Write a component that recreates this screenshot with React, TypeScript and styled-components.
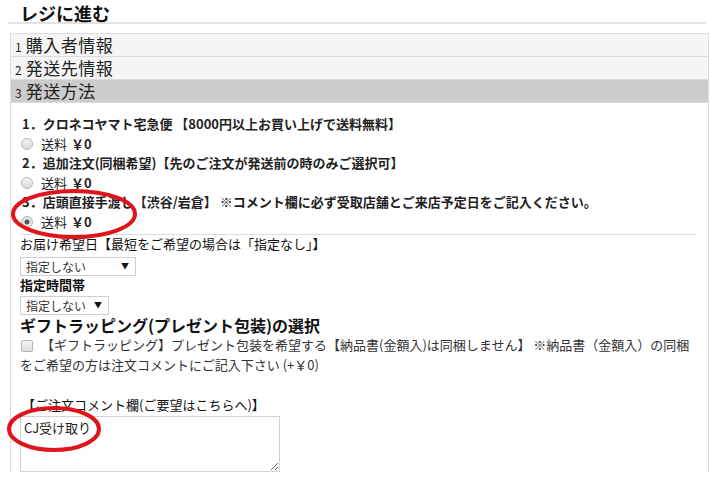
import React from "react";
import styled, { createGlobalStyle } from "styled-components";

const Global = createGlobalStyle`
  html, body { margin: 0; padding: 0; background: #fff; }
  body { font-family: "Noto Sans CJK JP", "Liberation Sans", sans-serif; color: #222; }
  * { box-sizing: border-box; }
`;

const Page = styled.div`
  position: relative;
  width: 710px;
  height: 491px;
  overflow: hidden;
  padding: 4px 2px 0 8px;
`;

const Title = styled.h2`
  margin: 0 2px 0 0;
  padding: 0 0 0 12px;
  height: 20px;
  line-height: 18px;
  font-size: 18px;
  font-weight: bold;
  color: #111;
  border-bottom: 2px solid #e2e2e2;
`;

const Panel = styled.div`
  margin: 9px 0 0 2px;
  width: 699px;
  border-left: 1px solid #ddd;
  border-right: 1px solid #ddd;
  border-top: 1px solid #ddd;
`;

const StepRow = styled.div<{ $active?: boolean }>`
  display: flex;
  align-items: baseline;
  height: 23px;
  line-height: 22px;
  padding-left: 4px;
  background: ${(p) => (p.$active ? "#cccccc" : "#f5f5f5")};
  border-bottom: 1px solid #dcdcdc;
`;

const StepNum = styled.span`
  font-size: 12px;
  margin-right: 4px;
`;

const StepLabel = styled.span`
  font-size: 17px;
  letter-spacing: 0.5px;
`;

const Content = styled.div`
  padding: 11px 11px 0 9px;
`;

const MethodTitle = styled.div`
  font-size: 13px;
  font-weight: bold;
  line-height: 20px;
  height: 20px;
  padding-left: 2px;
  white-space: nowrap;
`;

const RadioRow = styled.label`
  display: flex;
  align-items: center;
  height: 19px;
  font-size: 13px;
  font-weight: bold;
  padding-left: 1px;
`;

const Radio = styled.input`
  appearance: none;
  width: 12px;
  height: 12px;
  margin: 0 8px 0 0;
  border: 1px solid #b5b5b5;
  border-radius: 50%;
  background: linear-gradient(#f2f2f2, #dcdcdc);
  &:checked {
    background: radial-gradient(circle, #555 0 2.2px, #e4e4e4 2.8px);
  }
`;

const Fee = styled.span`
  font-weight: normal;
  margin-right: 4px;
`;

const Divider = styled.hr`
  border: 0;
  border-top: 1px solid #ddd;
  margin: 3px 0 0 0;
  width: 677px;
`;

const FieldLabel = styled.div<{ $bold?: boolean }>`
  font-size: 13px;
  font-weight: ${(p) => (p.$bold ? "bold" : "normal")};
  color: #111;
  line-height: 18px;
  height: 18px;
`;

const SelectWrap = styled.div<{ $w: number; $top: number }>`
  position: relative;
  width: ${(p) => p.$w}px;
  height: 19px;
  margin-top: ${(p) => p.$top}px;
`;

const Select = styled.select`
  appearance: none;
  display: block;
  width: 100%;
  height: 100%;
  border: 1px solid #cfcfcf;
  background: #fff;
  font-family: inherit;
  font-size: 12px;
  color: #333;
  padding: 0 0 0 5px;
  border-radius: 0;
`;

const Arrow = styled.span`
  position: absolute;
  right: 7px;
  top: 3px;
  font-size: 8px;
  line-height: 12px;
  color: #111;
  pointer-events: none;
`;

const GiftHeading = styled.div`
  font-size: 16px;
  font-weight: bold;
  line-height: 20px;
  height: 20px;
  color: #111;
`;

const GiftRow = styled.label`
  display: block;
  font-size: 13px;
  line-height: 20px;
  color: #333;
  width: 690px;
`;

const Check = styled.input`
  appearance: none;
  width: 12px;
  height: 12px;
  margin: 0 8px 0 1px;
  vertical-align: -2px;
  border: 1px solid #b5b5b5;
  border-radius: 2px;
  background: linear-gradient(#f4f4f4, #dedede);
`;

const CommentLabel = styled.div`
  font-size: 13px;
  line-height: 18px;
  margin-top: 21px;
  padding-left: 2px;
  color: #111;
`;

const Textarea = styled.textarea`
  display: block;
  width: 260px;
  height: 56px;
  margin-top: 2px;
  border: 1px solid #d4d4d4;
  font-family: inherit;
  font-size: 13px;
  line-height: 18px;
  color: #222;
  padding: 2px 3px;
  resize: both;
`;

const Annotations = styled.svg`
  position: absolute;
  left: 0;
  top: 0;
  pointer-events: none;
`;

export default function App() {
  return (
    <>
      <Global />
      <Page>
        <Title>レジに進む</Title>
        <Panel>
          <StepRow>
            <StepNum>1</StepNum>
            <StepLabel>購入者情報</StepLabel>
          </StepRow>
          <StepRow>
            <StepNum>2</StepNum>
            <StepLabel>発送先情報</StepLabel>
          </StepRow>
          <StepRow $active>
            <StepNum>3</StepNum>
            <StepLabel>発送方法</StepLabel>
          </StepRow>
          <Content>
            <MethodTitle>1．クロネコヤマト宅急便 【8000円以上お買い上げで送料無料】</MethodTitle>
            <RadioRow>
              <Radio type="radio" name="ship" />
              <Fee>送料</Fee>￥0
            </RadioRow>
            <MethodTitle>2．追加注文(同梱希望)【先のご注文が発送前の時のみご選択可】</MethodTitle>
            <RadioRow>
              <Radio type="radio" name="ship" />
              <Fee>送料</Fee>￥0
            </RadioRow>
            <MethodTitle>3．店頭直接手渡し【渋谷/岩倉】 ※コメント欄に必ず受取店舗とご来店予定日をご記入ください。</MethodTitle>
            <RadioRow>
              <Radio type="radio" name="ship" defaultChecked />
              <Fee>送料</Fee>￥0
            </RadioRow>
            <Divider />
            <FieldLabel>お届け希望日【最短をご希望の場合は「指定なし」】</FieldLabel>
            <SelectWrap $w={116} $top={4}>
              <Select defaultValue="none">
                <option value="none">指定しない</option>
              </Select>
              <Arrow>▼</Arrow>
            </SelectWrap>
            <FieldLabel $bold>指定時間帯</FieldLabel>
            <SelectWrap $w={89} $top={2}>
              <Select defaultValue="none">
                <option value="none">指定しない</option>
              </Select>
              <Arrow>▼</Arrow>
            </SelectWrap>
            <GiftHeading>ギフトラッピング(プレゼント包装)の選択</GiftHeading>
            <GiftRow>
              <Check type="checkbox" />
              【ギフトラッピング】プレゼント包装を希望する【納品書(金額入)は同梱しません】 ※納品書（金額入）の同梱
              <br />
              をご希望の方は注文コメントにご記入下さい (+￥0)
            </GiftRow>
            <CommentLabel>【ご注文コメント欄(ご要望はこちらへ)】</CommentLabel>
            <Textarea defaultValue="CJ受け取り" />
          </Content>
        </Panel>
        <Annotations width="710" height="491" viewBox="0 0 710 491">
          <ellipse cx="74" cy="214" rx="61" ry="23" fill="none" stroke="#e0141b" strokeWidth="4" />
          <ellipse cx="54" cy="429" rx="45" ry="21" fill="none" stroke="#e0141b" strokeWidth="4" />
        </Annotations>
      </Page>
    </>
  );
}
